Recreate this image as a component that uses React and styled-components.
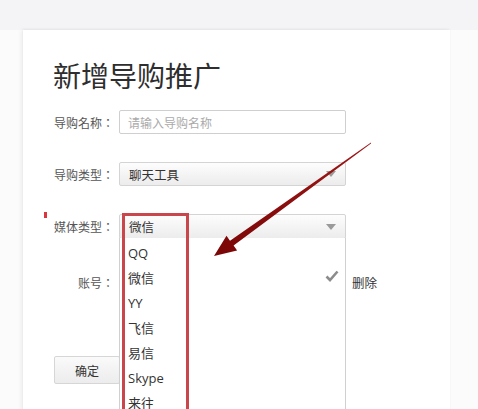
import React from 'react';
import styled, { createGlobalStyle } from 'styled-components';

const GlobalStyle = createGlobalStyle`
  html, body {
    margin: 0;
    padding: 0;
    background: #fbfbfc;
  }
  body {
    font-family: "Noto Sans CJK SC", "Noto Sans", sans-serif;
    color: #333;
  }
`;

const Page = styled.div`
  position: relative;
  width: 478px;
  height: 409px;
  overflow: hidden;
  box-sizing: border-box;
  padding: 30px 0 0 23px;
  background: linear-gradient(#f4f3f6 0, #f4f3f6 30px, #fbfbfc 30px);
`;

const Card = styled.div`
  position: relative;
  width: 427px;
  height: 400px;
  box-sizing: border-box;
  padding: 27px 30px 0;
  background: #fff;
  box-shadow: -2px 0 4px rgba(0, 0, 0, 0.06), 0 -1px 2px rgba(0, 0, 0, 0.04);
`;

const Title = styled.h1`
  margin: 0;
  font-size: 28px;
  line-height: 36px;
  font-weight: 400;
  color: #2e2e2e;
`;

const Form = styled.div`
  display: flex;
  flex-direction: column;
  margin-top: 17px;
`;

const Row = styled.div`
  position: relative;
  display: flex;
  align-items: center;
  height: ${p => p.$h || 24}px;
  margin-top: ${p => p.$gap || 0}px;
`;

const Label = styled.label`
  position: relative;
  width: 66px;
  box-sizing: border-box;
  padding-right: 5px;
  text-align: right;
  font-family: "Noto Sans CJK TC", "Noto Sans CJK SC", sans-serif;
  font-size: 12px;
  color: #555;
  white-space: nowrap;
`;

const Required = styled.span`
  position: absolute;
  left: -9px;
  top: -6px;
  width: 3px;
  height: 6px;
  background: #d9363e;
`;

const Input = styled.div`
  width: 227px;
  height: 24px;
  box-sizing: border-box;
  border: 1px solid #cfcfcf;
  border-radius: 2px;
  padding-left: 8px;
  display: flex;
  align-items: center;
  font-size: 12px;
  color: #aaa;
  background: #fff;
`;

const Select = styled.div`
  position: relative;
  width: 227px;
  height: ${p => p.$h || 24}px;
  box-sizing: border-box;
  border: 1px solid #d4d4d4;
  border-radius: 2px;
  padding-left: 9px;
  display: flex;
  align-items: center;
  font-size: 12.5px;
  color: #333;
  background: linear-gradient(#fdfdfd, #ececec);
`;

const Caret = styled.span`
  position: absolute;
  right: 9px;
  top: 50%;
  margin-top: -3px;
  width: 0;
  height: 0;
  border-left: 5px solid transparent;
  border-right: 5px solid transparent;
  border-top: 6px solid #9a9a9a;
`;

const Dropdown = styled.ul`
  position: absolute;
  left: -1px;
  top: 100%;
  width: 227px;
  height: 200px;
  margin: 0;
  padding: 3px 0 0;
  list-style: none;
  box-sizing: border-box;
  background: #fff;
  border: 1px solid #d0d0d0;
  border-top: none;
  z-index: 5;
`;

const Option = styled.li`
  position: relative;
  height: 25px;
  line-height: 25px;
  padding-left: 8px;
  font-size: 13px;
  color: #333;
  font-family: "Open Sans", "Noto Sans CJK SC", sans-serif;
`;

const Check = styled.svg`
  position: absolute;
  right: 6px;
  top: 4px;
`;

const Delete = styled.span`
  margin-left: 6px;
  font-size: 12.5px;
  color: #333;
`;

const Button = styled.button`
  width: 66px;
  height: 28px;
  margin-left: 1px;
  border: 1px solid #d6d6d6;
  border-radius: 2px;
  background: linear-gradient(#fafafa, #ececec);
  font-family: "Noto Sans CJK SC", sans-serif;
  font-size: 12px;
  color: #333;
  padding: 0;
`;

const Highlight = styled.div`
  position: absolute;
  left: 122px;
  top: 213px;
  width: 67px;
  height: 210px;
  box-sizing: border-box;
  border: 3px solid #c9474c;
  z-index: 10;
`;

const Arrow = styled.svg`
  position: absolute;
  left: 0;
  top: 0;
  z-index: 11;
  pointer-events: none;
`;

const options = ['QQ', '微信', 'YY', '飞信', '易信', 'Skype', '来往'];

const App = () => {
  return (
    <>
      <GlobalStyle />
      <Page>
        <Card>
          <Title>新增导购推广</Title>
          <Form>
            <Row>
              <Label>导购名称：</Label>
              <Input>请输入导购名称</Input>
            </Row>
            <Row $gap={28}>
              <Label>导购类型：</Label>
              <Select>
                聊天工具
                <Caret />
              </Select>
            </Row>
            <Row $gap={28} $h={25}>
              <Label>
                <Required />
                媒体类型：
              </Label>
              <Select $h={25}>
                微信
                <Caret />
                <Dropdown>
                  {options.map(o => (
                    <Option key={o}>
                      {o}
                      {o === '微信' && (
                        <Check width="14" height="12" viewBox="0 0 14 12">
                          <path d="M1.5 6.5 L5 10 L12.5 1.5" fill="none" stroke="#8c8c8c" strokeWidth="2.6" />
                        </Check>
                      )}
                    </Option>
                  ))}
                </Dropdown>
              </Select>
            </Row>
            <Row $gap={31}>
              <Label>账号：</Label>
              <Input />
              <Delete>删除</Delete>
            </Row>
            <Row $gap={62} $h={28}>
              <Button>确定</Button>
            </Row>
          </Form>
        </Card>
        <Highlight />
        <Arrow width="478" height="409" viewBox="0 0 478 409">
          <defs>
            <linearGradient id="ag" x1="370" y1="143" x2="214" y2="256" gradientUnits="userSpaceOnUse">
              <stop offset="0" stopColor="#a01818" />
              <stop offset="1" stopColor="#7a0606" />
            </linearGradient>
          </defs>
          <polygon
            points="371,142.5 230,240.7 226.5,235.8 214,256 237.1,250.4 233.6,245.5 371,143.5"
            fill="url(#ag)"
          />
        </Arrow>
      </Page>
    </>
  );
};

export default App;
